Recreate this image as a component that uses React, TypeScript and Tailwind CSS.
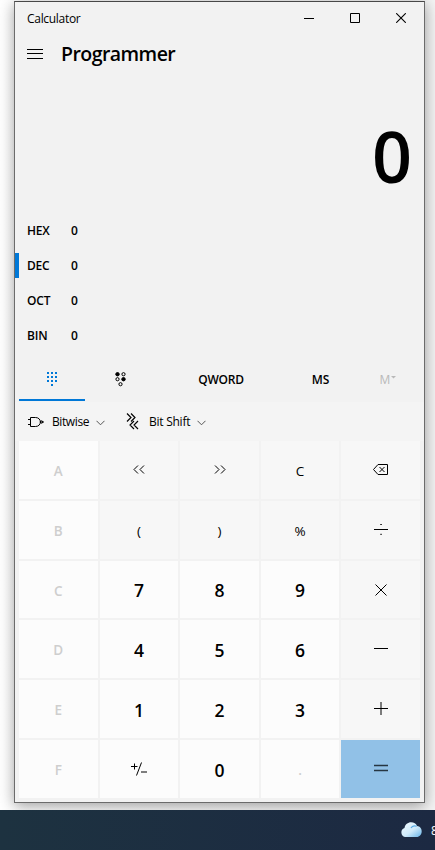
import type { ReactNode } from "react";

function Svg({ w, h, className = "", children }: { w: number; h: number; className?: string; children: ReactNode }) {
  return (
    <svg width={w} height={h} viewBox={`0 0 ${w} ${h}`} fill="none" stroke="currentColor" className={`block shrink-0 ${className}`}>
      {children}
    </svg>
  );
}

function TitleBar() {
  return (
    <div className="flex h-8 items-center">
      <span className="ml-3 flex-1 pt-0.5 text-[12px] leading-4 tracking-[-0.3px]">Calculator</span>
      <div className="flex h-8 w-[46px] items-center justify-center">
        <Svg w={10} h={10}><path d="M0 5.5h10" /></Svg>
      </div>
      <div className="flex h-8 w-[46px] items-center justify-center">
        <Svg w={10} h={10}><path d="M.5.5h9v9h-9z" /></Svg>
      </div>
      <div className="flex h-8 w-[46px] items-center justify-center">
        <Svg w={10} h={10}><path d="M.2.2l9.6 9.6M9.8.2L.2 9.8" strokeWidth="1.1" /></Svg>
      </div>
    </div>
  );
}

function Header() {
  return (
    <div className="flex h-10 items-center">
      <Svg w={16} h={10} className="ml-3"><path d="M0 .5h16M0 4.5h16M0 9.5h16" /></Svg>
      <h1 className="mb-px ml-[18px] text-[19.5px] font-semibold leading-6 tracking-[-0.55px]">Programmer</h1>
    </div>
  );
}

const bases = ["HEX", "DEC", "OCT", "BIN"];

function Bases() {
  return (
    <div className="flex h-[139px] flex-col">
      {bases.map((b) => (
        <div key={b} className="flex flex-1 items-center text-[12px] font-semibold">
          <span className={`h-[25px] w-1 ${b === "DEC" ? "bg-[#0078d7]" : ""}`} />
          <span className="ml-2 w-11 pt-0.5 tracking-[-0.2px]">{b}</span>
          <span className="pt-0.5">0</span>
        </div>
      ))}
    </div>
  );
}

function Tabs() {
  return (
    <div className="flex h-[42px] px-1 text-[12px] font-semibold">
      <div className="flex w-[66px] flex-col items-center justify-between text-[#0078d7]">
        <Svg w={10} h={14} className="mt-3">
          <g fill="currentColor" stroke="none">
            {[0, 4, 8].map((y) => [0, 4, 8].map((x) => <rect key={`${x}-${y}`} x={x} y={y} width="2" height="2" />))}
            <rect x="4" y="12" width="2" height="2" />
          </g>
        </Svg>
        <span className="mb-px h-0.5 w-full bg-[#0078d7]" />
      </div>
      <div className="flex w-[70px] justify-center pt-3">
        <Svg w={11} h={15}>
          <circle cx="2.5" cy="2.2" r="1.7" fill="currentColor" />
          <circle cx="8.5" cy="2.2" r="1.6" />
          <circle cx="2.5" cy="7.2" r="1.6" />
          <circle cx="8.5" cy="7.2" r="1.7" fill="currentColor" />
          <circle cx="5.5" cy="12.2" r="1.6" />
        </Svg>
      </div>
      <div className="flex w-[132px] items-center justify-center pb-0.5 tracking-[-0.2px]">QWORD</div>
      <div className="flex w-[67px] items-center justify-center pb-0.5">MS</div>
      <div className="flex w-[66px] items-center justify-center gap-px pb-0.5 pl-0.5 font-normal text-[#b9b9b9]">
        M
        <Svg w={5} h={10}><path d="M0 1h5l-2.5 2.5z" fill="currentColor" stroke="none" /></Svg>
      </div>
    </div>
  );
}

function Chevron({ className = "" }: { className?: string }) {
  return <Svg w={9} h={6} className={`text-[#555] ${className}`}><path d="M.5.8l4 4 4-4" /></Svg>;
}

function Operators() {
  return (
    <div className="flex h-[39px] items-center bg-[#f4f4f4] text-[12px]">
      <Svg w={16} h={10} className="ml-[13px]">
        <path d="M2.5.5h5C14 .5 14 9.5 7.5 9.5h-5zM0 2.5h2.5M0 7.5h2.5M12 5h4" />
        <circle cx="13.5" cy="5" r="1.2" />
      </Svg>
      <span className="ml-2 w-[44px] whitespace-nowrap pt-px tracking-[-0.4px]">Bitwise</span>
      <Chevron className="mt-0.5" />
      <Svg w={13} h={17} className="ml-[21px]">
        <path d="M1 .5L5 4.5 1 8.5M5 .5L9 4.5 5 8.5M8 8L4 12l4 4M12 8L8 12l4 4" strokeWidth="1.15" />
      </Svg>
      <span className="ml-[10px] w-[48px] whitespace-nowrap pt-px tracking-[-0.25px]">Bit Shift</span>
      <Chevron className="mt-0.5" />
    </div>
  );
}

type Kind = "num" | "off" | "fn" | "eq";
type Key = { id: string; kind: Kind; face: ReactNode };

const num = (id: string): Key => ({ id, kind: "num", face: id });
const off = (id: string): Key => ({ id, kind: "off", face: id });
const fn = (id: string, face: ReactNode = id): Key => ({ id, kind: "fn", face });

const keys: Key[] = [
  off("A"),
  fn("lsh", <Svg w={12} h={9} className="mb-0.5"><path d="M5 .5l-4 4 4 4M11 .5l-4 4 4 4" /></Svg>),
  fn("rsh", <Svg w={12} h={9} className="mb-0.5 ml-0.5"><path d="M1 .5l4 4-4 4M7 .5l4 4-4 4" /></Svg>),
  fn("C"),
  fn("back", (
    <Svg w={15} h={11} className="mb-0.5">
      <path d="M5 .5h9.5v10H5l-4.5-5zM6.5 3l5 5M11.5 3l-5 5" />
    </Svg>
  )),
  off("B"), fn("("), fn(")"), fn("%"),
  fn("div", <Svg w={14} h={12} className="mb-1"><path d="M0 6.5h14M6.3 1.5h1.5M6.3 11.3h1.5" /></Svg>),
  off("C"), num("7"), num("8"), num("9"),
  fn("mul", <Svg w={12} h={12} className="mb-0.5"><path d="M.5.5l11 11M11.5.5l-11 11" /></Svg>),
  off("D"), num("4"), num("5"), num("6"),
  fn("sub", <Svg w={14} h={14} className="mb-1"><path d="M0 7.5h14" /></Svg>),
  off("E"), num("1"), num("2"), num("3"),
  fn("add", <Svg w={14} h={14} className="mb-1"><path d="M0 7.5h14M7 1v13" /></Svg>),
  off("F"),
  {
    id: "neg", kind: "num", face: (
      <Svg w={16} h={14} className="mb-0.5"><path d="M0 4.5h6.5M3.5 1.5v6M10.5.5l-5 13M10 10h6" /></Svg>
    ),
  },
  num("0"),
  off("."),
  { id: "eq", kind: "eq", face: <Svg w={14} h={8} className="mb-1"><path d="M0 1.5h14M0 6.5h14" strokeWidth="1.3" /></Svg> },
];

const kinds: Record<Kind, string> = {
  num: "bg-[#fcfcfc] pt-px text-[17.5px] font-semibold",
  off: "bg-[#fcfcfc] pt-0.5 text-[13.5px] font-semibold text-[#cecece]",
  fn: "bg-[#f7f7f7] pt-0.5 text-[13.5px]",
  eq: "bg-[#91c1e7] pt-0.5 text-[#263642]",
};

function Keypad() {
  return (
    <div className="mx-1 grid h-[357px] grid-cols-5 grid-rows-6 gap-0.5">
      {keys.map((k, i) => (
        <div key={i} className={`flex items-center justify-center leading-5 ${kinds[k.kind]}`}>{k.face}</div>
      ))}
    </div>
  );
}

export default function App() {
  return (
    <div className="flex h-[850px] w-[435px] flex-col overflow-hidden bg-white font-['Open_Sans','Noto_Sans',sans-serif] text-black">
      <div className="h-[810px] overflow-hidden bg-linear-to-r from-white to-[#f4f4f4] pl-3.5 pt-px">
        <main className="flex h-[802px] w-[411px] flex-col border border-[#6b6b6b] border-t-[#484848] bg-[#f2f2f2] shadow-[0_3px_14px_rgba(0,0,0,0.38)]">
          <TitleBar />
          <Header />
          <div className="flex h-[139px] items-start justify-end pr-3 pt-[47px] text-[70px] font-semibold leading-[70px]">0</div>
          <Bases />
          <div className="h-2" />
          <Tabs />
          <Operators />
          <Keypad />
        </main>
      </div>
      <footer className="flex h-10 items-center bg-linear-to-r from-[#1d3240] to-[#1c2942] text-white">
        <svg width="22" height="16" viewBox="0 0 22 16" className="mb-px ml-[400px] shrink-0">
          <defs>
            <linearGradient id="cloud" x1="0" y1="0" x2="1" y2="1">
              <stop offset="0" stopColor="#f3fbff" />
              <stop offset=".55" stopColor="#cfeafa" />
              <stop offset="1" stopColor="#66b3e8" />
            </linearGradient>
          </defs>
          <path d="M5 15A4.7 4.7 0 0 1 4.5 6C5 2.5 8 .3 11 .3c3 0 5 1.3 6 3.7 3 .2 4.7 2.6 4.7 5.2 0 3.2-2 5.8-5.2 5.8z" fill="url(#cloud)" />
          <path d="M11 6c1-2 3.4-2.6 5.7-1.8" fill="none" stroke="#55aae5" strokeWidth="1.2" />
        </svg>
        <span className="ml-[9px] whitespace-nowrap pt-0.5 text-[12px]">8</span>
      </footer>
    </div>
  );
}
